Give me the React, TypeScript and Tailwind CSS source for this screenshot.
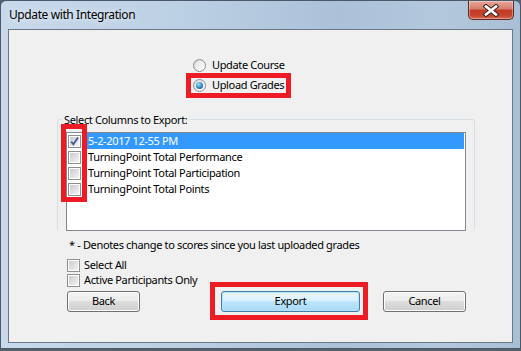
import React from 'react';

const Radio: React.FC<{ checked?: boolean }> = ({ checked }) => (
  <span className="flex h-[13px] w-[13px] shrink-0 items-center justify-center rounded-full border border-[#8c8f94] bg-[linear-gradient(135deg,#cfd1d4,#f7f7f7_75%)]">
    <span className="flex h-[9px] w-[9px] items-center justify-center rounded-full bg-[linear-gradient(135deg,#e4e4e4,#fdfdfd)]">
      {checked && (
        <span className="h-[7px] w-[7px] rounded-full bg-[radial-gradient(circle_at_40%_35%,#a6e3fb,#2a86c2_55%,#0e3f68)]" />
      )}
    </span>
  </span>
);

const Check: React.FC<{ checked?: boolean }> = ({ checked }) => (
  <span className="relative flex h-[13px] w-[13px] shrink-0 items-center justify-center border border-[#8e8f8f] bg-white">
    <span className="h-[9px] w-[9px] bg-[linear-gradient(135deg,#c9ccd1,#f3f3f3)]" />
    {checked && (
      <svg className="absolute left-0 top-0" width="11" height="11" viewBox="0 0 11 11">
        <path d="M2.2 5.6 L4.4 8.3 L9 1.6" fill="none" stroke="#3f5b98" strokeWidth="1.8" />
      </svg>
    )}
  </span>
);

const WinButton: React.FC<{ label: string; focused?: boolean; className?: string; children?: React.ReactNode }> = ({
  label,
  focused,
  className,
  children,
}) => (
  <div className={`relative ${className ?? ''}`}>
    <button
      className={
        'flex h-[21px] w-full items-center justify-center rounded-[3px] border text-black ' +
        (focused
          ? 'border-[#3c7fb1] bg-[linear-gradient(#eaf6fd,#d9f0fc_50%,#bee6fd_50%,#a7d9f5)] shadow-[inset_0_0_0_1px_#b9e1f7]'
          : 'border-[#707070] bg-[linear-gradient(#f2f2f2,#ebebeb_50%,#dddddd_50%,#cfcfcf)] shadow-[inset_0_0_0_1px_#fcfcfc]')
      }
    >
      {label}
    </button>
    {children}
  </div>
);

const columns = [
  '5-2-2017 12-55 PM',
  'TurningPoint Total Performance',
  'TurningPoint Total Participation',
  'TurningPoint Total Points',
];

export default function App() {
  return (
    <div className="h-[351px] w-[521px] overflow-hidden whitespace-nowrap bg-[#55606b] font-['Segoe_UI','Noto_Sans',sans-serif] text-[11px] tracking-[-0.35px] text-black">
      <div className="flex h-[349px] w-[521px] flex-col rounded-t-[6px] border border-[#4b5867] bg-[linear-gradient(90deg,#c7d9eb,#bcd0e4_35%,#aac1d8_65%,#b3c8dd_85%,#a9bfd5)]">
        {/* title bar */}
        <div className="flex h-[28px] shrink-0 items-start justify-between">
          <span className="ml-[8px] mt-[6px] text-[12px] leading-[16px] tracking-[-0.4px] [text-shadow:0_0_6px_#ffffff]">
            Update with Integration
          </span>
          <div className="mr-[6px] flex h-[19px] w-[46px] items-center justify-center rounded-b-[5px] border border-t-0 border-[#5b2a25] bg-[linear-gradient(#e6a69a,#d47b6a_45%,#c23a25_50%,#c6442d_80%,#d86a4c)] shadow-[inset_0_0_0_1px_rgba(255,255,255,0.35)]">
            <svg width="18" height="13" viewBox="0 0 18 13">
              <path d="M4 2.5 L14 10.5 M14 2.5 L4 10.5" stroke="#3b2424" strokeWidth="4.6" strokeLinecap="square" />
              <path d="M4 2.5 L14 10.5 M14 2.5 L4 10.5" stroke="#ffffff" strokeWidth="2.6" strokeLinecap="square" />
            </svg>
          </div>
        </div>

        {/* client area */}
        <div className="mx-[7px] h-[314px] border border-[#697786] bg-[#f0f0f0]">
          <div className="ml-[177px] mt-[27px] flex flex-col">
            <div className="flex h-[16px] items-center gap-[6px] pl-[7px]">
              <Radio />
              <span>Update Course</span>
            </div>
            <div className="flex h-[25px] w-[105px] items-center gap-[6px] border-[5px] border-[#ed1c24] pl-[2px]">
              <Radio checked />
              <span>Upload Grades</span>
            </div>
          </div>

          <fieldset className="ml-[48px] mt-[14px] w-[418px] rounded-[3px] border border-b-0 border-[#d5dfe5]">
            <legend className="ml-[4px] px-[2px] leading-[15px]">Select Columns to Export:</legend>
            <div className="relative ml-[8px] mt-[5px] h-[99px] w-[400px] border border-[#828790] bg-white">
              {columns.map((c, i) => (
                <div key={c} className="flex h-[16px] items-center">
                  <span className="ml-[1px]">
                    <Check checked={i === 0} />
                  </span>
                  <span
                    className={
                      'ml-[3px] flex h-[16px] flex-1 items-center pl-[4px] ' +
                      (i === 0 ? 'mr-[1px] bg-[#3399ff] text-white' : '')
                    }
                  >
                    {c}
                  </span>
                </div>
              ))}
              <div className="pointer-events-none absolute left-[-6px] top-[-9px] h-[78px] w-[26px] border-[5px] border-[#ed1c24]" />
            </div>
          </fieldset>

          <div className="ml-[60px] mt-[6px] h-[15px] leading-[15px]">
            * - Denotes change to scores since you last uploaded grades
          </div>

          <div className="ml-[58px] mt-[6px] flex flex-col">
            <div className="flex h-[15px] items-center gap-[4px]">
              <Check />
              <span>Select All</span>
            </div>
            <div className="flex h-[15px] items-center gap-[4px]">
              <Check />
              <span>Active Participants Only</span>
            </div>
          </div>

          <div className="ml-[58px] mt-[3px] flex">
            <WinButton label="Back" className="w-[73px]" />
            <WinButton label="Export" focused className="ml-[81px] w-[139px]">
              <div className="pointer-events-none absolute bottom-[-8px] left-[-11px] right-[-8px] top-[-9px] border-[5px] border-[#ed1c24]" />
            </WinButton>
            <WinButton label="Cancel" className="ml-[23px] w-[83px]" />
          </div>
        </div>
      </div>
    </div>
  );
}
